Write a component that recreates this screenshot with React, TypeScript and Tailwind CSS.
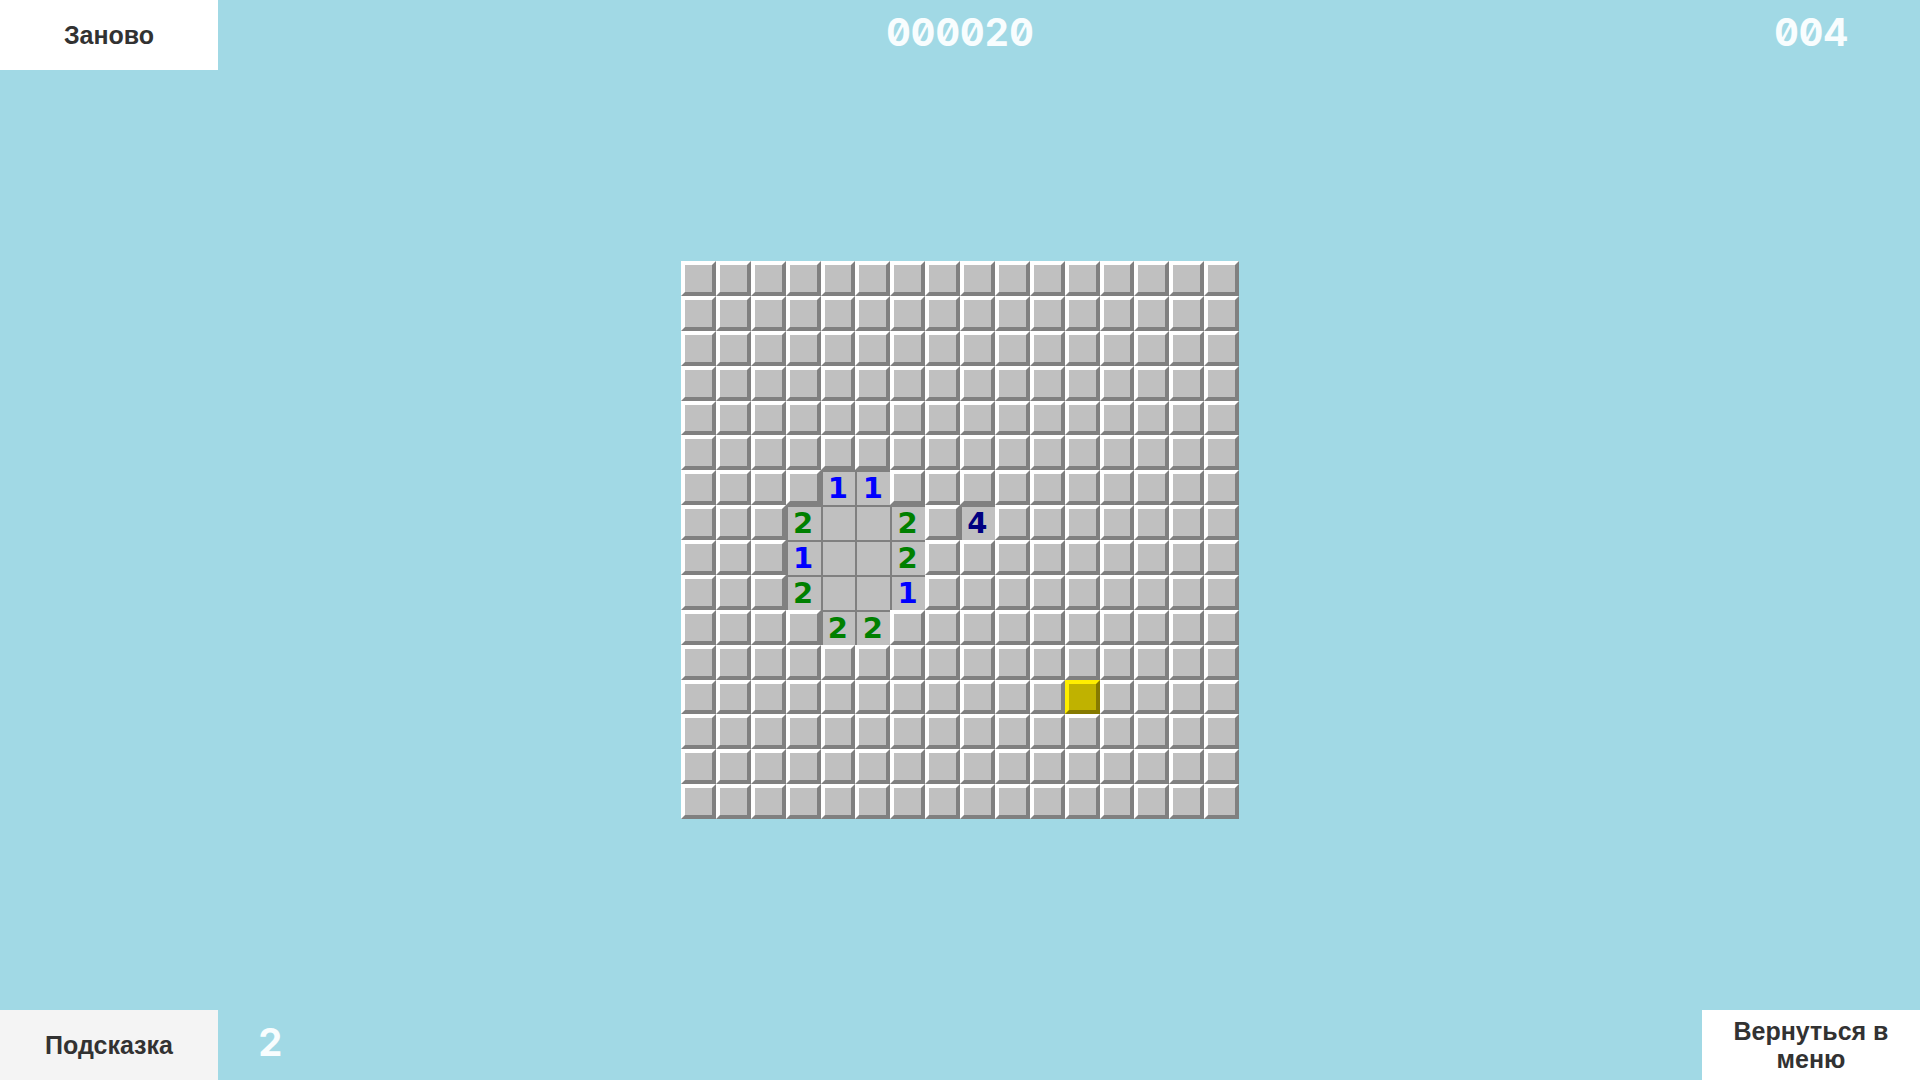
import { useState } from "react";

const SIZE = 16;

const OPENED: Record<string, number> = {
  "6-4": 1,
  "6-5": 1,
  "7-3": 2,
  "7-4": 0,
  "7-5": 0,
  "7-6": 2,
  "7-8": 4,
  "8-3": 1,
  "8-4": 0,
  "8-5": 0,
  "8-6": 2,
  "9-3": 2,
  "9-4": 0,
  "9-5": 0,
  "9-6": 1,
  "10-4": 2,
  "10-5": 2,
};

const DIGIT_COLORS: Record<number, string> = {
  1: "text-[#0000ff]",
  2: "text-[#008000]",
  4: "text-[#000080]",
};

const HINT = "12-11";

function Cell({ row, col }: { row: number; col: number }) {
  const key = `${row}-${col}`;
  const value = OPENED[key];
  const label = `Ряд ${row + 1}, столбец ${col + 1}`;

  if (value !== undefined) {
    return (
      <button
        type="button"
        aria-label={value ? `${label}: ${value}` : label}
        className={`flex aspect-square min-w-0 items-center justify-center overflow-hidden border-t-2 border-l-2 border-[#808080] bg-[#c0c0c0] pr-0.5 font-['DejaVu_Sans',sans-serif] text-[29px] leading-none font-bold ${DIGIT_COLORS[value] ?? ""}`}
      >
        {value || null}
      </button>
    );
  }

  const tone =
    key === HINT
      ? "border-t-[#ffee00] border-l-[#ffee00] border-r-[#857900] border-b-[#857900] bg-[#c0b200]"
      : "border-t-white border-l-white border-r-[#808080] border-b-[#808080] bg-[#c0c0c0]";

  return <button type="button" aria-label={label} className={`aspect-square min-w-0 border-4 ${tone}`} />;
}

function Counter({ value, label }: { value: string; label: string }) {
  return (
    <output
      aria-label={label}
      className="font-[Inter,sans-serif] text-[38px] leading-10 font-bold text-[#f8fdfe] slashed-zero tabular-nums"
    >
      {value}
    </output>
  );
}

function MenuButton({ children, tone = "bg-white" }: { children: string; tone?: string }) {
  return (
    <button
      type="button"
      className={`min-h-[70px] w-[218px] px-6 text-center text-[25px] leading-7 font-bold text-[#323232] ${tone}`}
    >
      {children}
    </button>
  );
}

export default function App() {
  const [hints] = useState(2);
  const cells = Array.from({ length: SIZE * SIZE }, (_, i) => ({ row: Math.floor(i / SIZE), col: i % SIZE }));

  return (
    <div className="flex min-h-screen flex-col bg-[#a1d9e5] font-['Liberation_Sans',Arial,sans-serif]">
      <header className="grid grid-cols-[1fr_auto_1fr] items-start">
        <div className="flex">
          <MenuButton>Заново</MenuButton>
        </div>
        <div className="flex pt-3">
          <Counter value="000020" label="Время" />
        </div>
        <div className="flex justify-end pt-3 pr-18">
          <Counter value="004" label="Мины" />
        </div>
      </header>

      <main className="flex flex-1 items-center justify-center">
        <div className="grid w-[558px] grid-cols-16">
          {cells.map(({ row, col }) => (
            <Cell key={`${row}-${col}`} row={row} col={col} />
          ))}
        </div>
      </main>

      <footer className="flex items-end justify-between">
        <div className="flex items-start gap-10">
          <MenuButton tone="bg-[#f4f4f4]">Подсказка</MenuButton>
          <div className="flex pt-3">
            <Counter value={String(hints)} label="Осталось подсказок" />
          </div>
        </div>
        <MenuButton>Вернуться в меню</MenuButton>
      </footer>
    </div>
  );
}
